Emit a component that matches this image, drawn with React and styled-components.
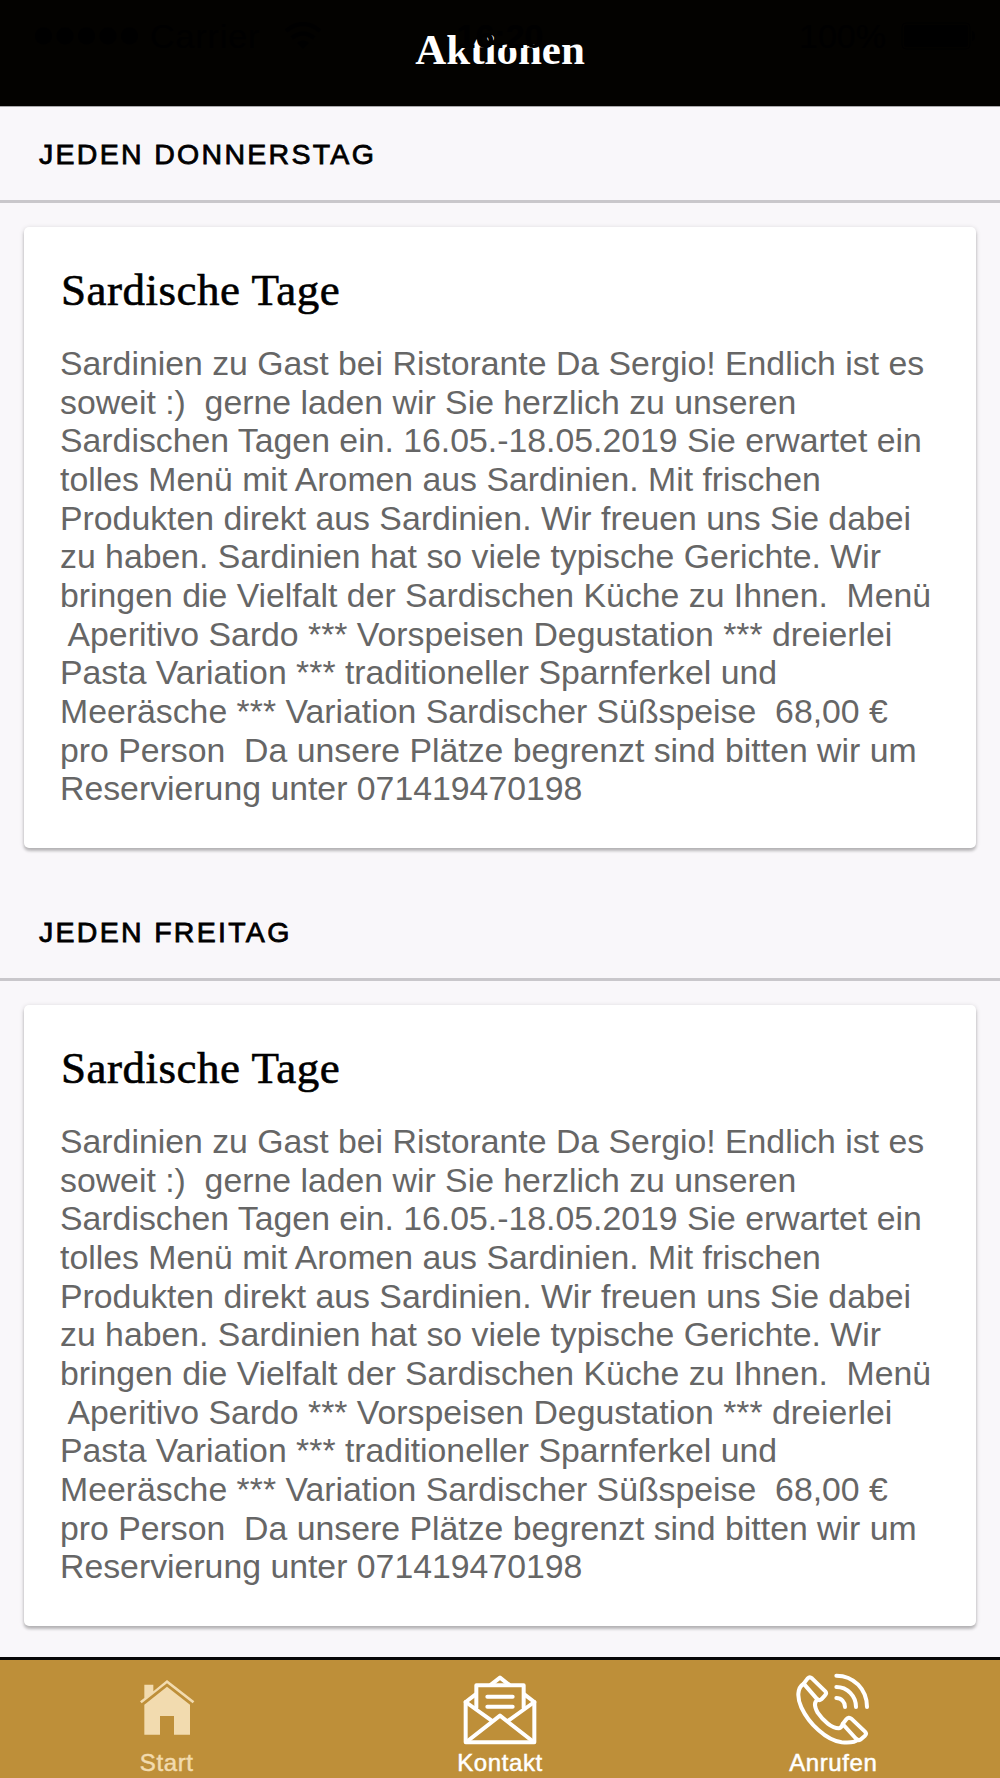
import React from "react";
import styled, { createGlobalStyle } from "styled-components";

const GlobalStyle = createGlobalStyle`
  * {
    box-sizing: border-box;
  }

  body {
    margin: 0;
    background: #f9f7fa;
    font-family: "Liberation Sans", Arial, sans-serif;
  }
`;

const Screen = styled.div`
  display: flex;
  flex-direction: column;
  width: 1000px;
  height: 1778px;
  overflow: hidden;
  background: #f9f7fa;
`;

const Header = styled.header`
  position: relative;
  flex: none;
  height: 107px;
  padding-top: 26px;
  background: #030200;
  border-bottom: 1px solid #a9a8aa;
  text-align: center;
`;

const HeaderTitle = styled.h1`
  margin: 0;
  font: bold 43px/48px "Liberation Serif", serif;
  color: #fff;
`;

// the system status bar lies on top of the header
const StatusBar = styled.div`
  position: absolute;
  inset: 17px 25px auto 35px;
  display: grid;
  grid-template-columns: 1fr auto 1fr;
  align-items: center;
  height: 38px;
  font-size: 34px;
  line-height: 38px;
  color: #000;
`;

const StatusGroup = styled.div`
  display: flex;
  align-items: center;
  justify-content: ${({ $end }) => ($end ? "flex-end" : "flex-start")};
  gap: ${({ $end }) => ($end ? "15px" : "0")};
`;

const Carrier = styled.span`
  margin: 0 25px 0 12px;
  letter-spacing: 0.9px;
`;

const Time = styled.span`
  font-weight: bold;
  margin-right: 10px;
`;

const Content = styled.main`
  flex: 1;
  display: flex;
  flex-direction: column;
  gap: 37px;
  overflow: hidden;
`;

const SectionTitle = styled.h2`
  height: 96px;
  margin: 0;
  padding: 31px 38px 0 39px;
  border-bottom: 3px solid #c9c7cb;
  font-size: 28.5px;
  font-weight: normal;
  line-height: 32px;
  letter-spacing: 2.3px;
  text-transform: uppercase;
  color: #000;
  -webkit-text-stroke: 0.8px #000;
`;

const Card = styled.article`
  height: 621px;
  margin: 24px 24px 0;
  padding: 38px 36px 0;
  border-radius: 5px;
  background: #fff;
  box-shadow: 0 3px 3px rgba(0, 0, 0, 0.2), 0 1px 5px rgba(0, 0, 0, 0.16);
`;

const CardTitle = styled.h3`
  margin: 0 0 29px 1px;
  font: normal 45px/50px "Liberation Serif", serif;
  letter-spacing: 0.5px;
  color: #000;
  -webkit-text-stroke: 0.6px #000;
`;

const CardText = styled.p`
  margin: 0;
  font-size: 33.8px;
  line-height: 38.67px;
  white-space: pre;
  color: #666;
`;

const TabBar = styled.nav`
  flex: none;
  display: grid;
  grid-template-columns: repeat(3, 1fr);
  height: 121px;
  border-top: 3px solid #080808;
  background: #be8f39;
`;

const Tab = styled.a`
  display: flex;
  flex-direction: column;
  align-items: center;
  gap: 6px;
  padding-top: 10px;
  color: ${({ $active }) => ($active ? "#f2dbaf" : "#fff")};
`;

const TabIcon = styled.svg`
  width: 80px;
  height: 75px;
  fill: none;
  stroke: currentColor;
  stroke-width: 12;
  stroke-linejoin: round;
  stroke-linecap: round;
`;

const TabLabel = styled.span`
  font-size: 24px;
  line-height: 24px;
  letter-spacing: 0.6px;
  -webkit-text-stroke: 0.5px currentColor;
`;

const HomeIcon = () => (
  <TabIcon viewBox="80 90 240 225">
    <g fill="currentColor" stroke="none">
      <path d="M200 140L269 194V284H221V228H179V284H132V194Z" />
      <path d="M132 134H159V154L200 120L282 184L277 190L200 130L124 190L119 184L132 174Z" />
    </g>
  </TabIcon>
);

const MailIcon = () => (
  <TabIcon viewBox="90 90 240 225">
    <path d="M139 203V136H281V203" />
    <path d="M183 134L210 113L237 134" />
    <path d="M137 163L107 186V307H313V186L283 163" />
    <path d="M107 186L185 242M313 186L235 242" />
    <path d="M109 306L210 227L311 306" />
    <path d="M172 170H248M172 200H248" />
  </TabIcon>
);

const PhoneIcon = () => (
  <TabIcon viewBox="100 90 240 225">
    <path d="M132 131L144 115Q150 109 157 115L197 154Q202 160 196 166L185 178Q179 183 173 178Z" />
    <path d="M249 252L260 238Q267 229 275 236L316 275Q322 281 316 287L302 299Q296 303 290 297Z" />
    <path d="M132 131C112 143 112 174 125 202C147 250 199 301 246 307C269 309 286 308 294 299" />
    <path d="M174 179C160 188 165 202 174 218C191 243 217 265 237 265Q246 263 249 253" />
    <path d="M230 107C282 107 322 148 322 201" />
    <path d="M230 141C263 141 289 168 289 201" />
    <path d="M230 174C245 174 256 186 256 201" />
  </TabIcon>
);

const SignalDots = () => (
  <svg width="103" height="18" viewBox="0 0 103 18">
    {[8.5, 30, 51.5, 73, 94.5].map((cx) => (
      <circle key={cx} cx={cx} cy="9" r="8.5" />
    ))}
  </svg>
);

const WifiIcon = () => (
  <svg width="36" height="28" viewBox="0 0 36 28" fill="none" stroke="#000">
    <path d="M1 9Q18 -5 35 9" strokeWidth="4" />
    <path d="M7 16Q18 7 29 16" strokeWidth="4" />
    <path d="M12 21Q18 16 24 21L18 27Z" fill="#000" stroke="none" />
  </svg>
);

const BatteryIcon = () => (
  <svg width="74" height="28" viewBox="0 0 74 28">
    <rect x="1" y="1" width="68" height="26" rx="4" fill="none" stroke="#000" />
    <rect x="3" y="3" width="64" height="22" rx="3" />
    <path d="M71 9Q74 10 74 14Q74 18 71 19Z" />
  </svg>
);

const description = [
  "Sardinien zu Gast bei Ristorante Da Sergio! Endlich ist es",
  "soweit :)  gerne laden wir Sie herzlich zu unseren",
  "Sardischen Tagen ein. 16.05.-18.05.2019 Sie erwartet ein",
  "tolles Menü mit Aromen aus Sardinien. Mit frischen",
  "Produkten direkt aus Sardinien. Wir freuen uns Sie dabei",
  "zu haben. Sardinien hat so viele typische Gerichte. Wir",
  "bringen die Vielfalt der Sardischen Küche zu Ihnen.  Menü",
  " Aperitivo Sardo *** Vorspeisen Degustation *** dreierlei",
  "Pasta Variation *** traditioneller Sparnferkel und",
  "Meeräsche *** Variation Sardischer Süßspeise  68,00 €",
  "pro Person  Da unsere Plätze begrenzt sind bitten wir um",
  "Reservierung unter 071419470198",
].join("\n");

const offers = [
  { day: "Jeden Donnerstag", title: "Sardische Tage", text: description },
  { day: "Jeden Freitag", title: "Sardische Tage", text: description },
];

const tabs = [
  { label: "Start", Icon: HomeIcon, active: true },
  { label: "Kontakt", Icon: MailIcon },
  { label: "Anrufen", Icon: PhoneIcon },
];

const App = () => {
  return (
    <>
      <GlobalStyle />
      <Screen>
        <Header>
          <HeaderTitle>Aktionen</HeaderTitle>
          <StatusBar>
            <StatusGroup>
              <SignalDots />
              <Carrier>Carrier</Carrier>
              <WifiIcon />
            </StatusGroup>
            <Time>16:20</Time>
            <StatusGroup $end>
              <span>100%</span>
              <BatteryIcon />
            </StatusGroup>
          </StatusBar>
        </Header>

        <Content>
          {offers.map(({ day, title, text }) => (
            <section key={day}>
              <SectionTitle>{day}</SectionTitle>
              <Card>
                <CardTitle>{title}</CardTitle>
                <CardText>{text}</CardText>
              </Card>
            </section>
          ))}
        </Content>

        <TabBar>
          {tabs.map(({ label, Icon, active }) => (
            <Tab key={label} $active={active}>
              <Icon />
              <TabLabel>{label}</TabLabel>
            </Tab>
          ))}
        </TabBar>
      </Screen>
    </>
  );
};

export default App;
